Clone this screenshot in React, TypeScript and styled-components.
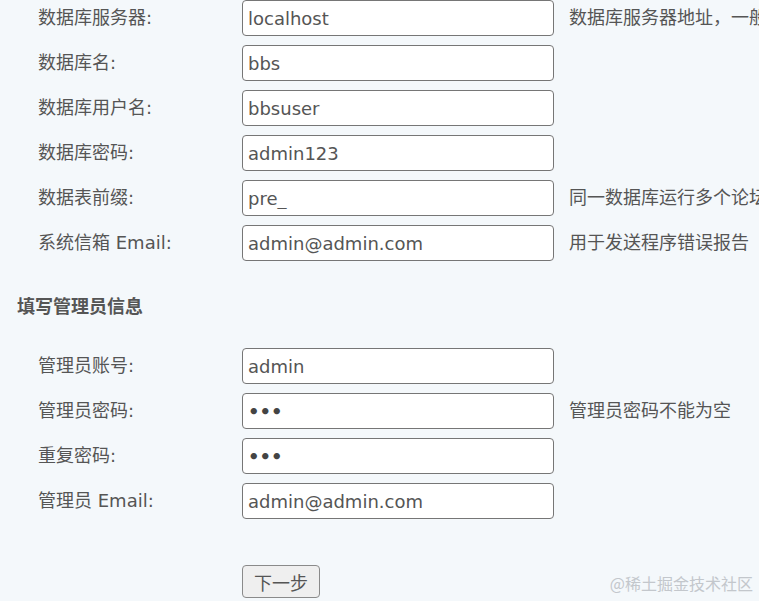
import React from 'react';
import styled, { createGlobalStyle } from 'styled-components';

const GlobalStyle = createGlobalStyle`
  html, body {
    margin: 0;
    padding: 0;
    width: 759px;
    height: 601px;
    overflow: hidden;
    background: #f4f8fb;
  }
  body {
    font-family: "DejaVu Sans", "Noto Sans CJK SC", sans-serif;
    color: #555;
  }
`;

const Page = styled.div`
  position: relative;
  width: 759px;
  height: 601px;
  padding: 0 0 0 17px;
  box-sizing: border-box;
  overflow: hidden;
`;

const FormGrid = styled.div`
  display: grid;
  grid-template-columns: 204px 312px max-content;
  row-gap: 9px;
  margin-left: 21px;
  align-items: center;
`;

const Label = styled.label`
  font-size: 18px;
  line-height: 24px;
  color: #555;
  white-space: nowrap;
`;

const TextInput = styled.input`
  box-sizing: border-box;
  width: 312px;
  height: 36px;
  margin: 0;
  padding: 0 5px;
  border: 1px solid #767676;
  border-radius: 4px;
  background: #fff;
  font-family: "DejaVu Sans", "Noto Sans CJK SC", sans-serif;
  font-size: 18px;
  color: #555;
  outline: none;

  &[type='password'] {
    color: #444;
    font-weight: bold;
  }
`;

const Note = styled.span`
  margin-left: 15px;
  font-size: 18px;
  line-height: 24px;
  color: #555;
  white-space: nowrap;
`;

const SectionTitle = styled.h3`
  margin: 34px 0 29px;
  font-size: 18px;
  line-height: 24px;
  font-weight: bold;
  color: #555;
`;

const Actions = styled.div`
  margin: 46px 0 0 225px;
`;

const NextButton = styled.button`
  box-sizing: border-box;
  height: 33px;
  padding: 0 11px;
  border: 1px solid #8a8a8a;
  border-radius: 4px;
  background: #efefef;
  font-family: "DejaVu Sans", "Noto Sans CJK SC", sans-serif;
  font-size: 18px;
  color: #555;
`;

const Watermark = styled.div`
  position: absolute;
  right: 6px;
  bottom: 7px;
  font-family: "Noto Sans CJK SC", sans-serif;
  font-size: 16px;
  line-height: 22px;
  color: #c3c7cc;
`;

type Field = {
  label: string;
  value: string;
  type?: string;
  note?: string;
};

const dbFields: Field[] = [
  { label: '数据库服务器:', value: 'localhost', note: '数据库服务器地址，一般为 localhost' },
  { label: '数据库名:', value: 'bbs' },
  { label: '数据库用户名:', value: 'bbsuser' },
  { label: '数据库密码:', value: 'admin123' },
  { label: '数据表前缀:', value: 'pre_', note: '同一数据库运行多个论坛时，请修改前缀' },
  { label: '系统信箱 Email:', value: 'admin@admin.com', note: '用于发送程序错误报告' },
];

const adminFields: Field[] = [
  { label: '管理员账号:', value: 'admin' },
  { label: '管理员密码:', value: '123', type: 'password', note: '管理员密码不能为空' },
  { label: '重复密码:', value: '123', type: 'password' },
  { label: '管理员 Email:', value: 'admin@admin.com' },
];

const Fields: React.FC<{ fields: Field[] }> = ({ fields }) => (
  <FormGrid>
    {fields.map((f) => (
      <React.Fragment key={f.label}>
        <Label>{f.label}</Label>
        <TextInput type={f.type ?? 'text'} defaultValue={f.value} />
        {f.note ? <Note>{f.note}</Note> : <span />}
      </React.Fragment>
    ))}
  </FormGrid>
);

export default function App() {
  return (
    <Page>
      <GlobalStyle />
      <Fields fields={dbFields} />
      <SectionTitle>填写管理员信息</SectionTitle>
      <Fields fields={adminFields} />
      <Actions>
        <NextButton type="button">下一步</NextButton>
      </Actions>
      <Watermark>@稀土掘金技术社区</Watermark>
    </Page>
  );
}
